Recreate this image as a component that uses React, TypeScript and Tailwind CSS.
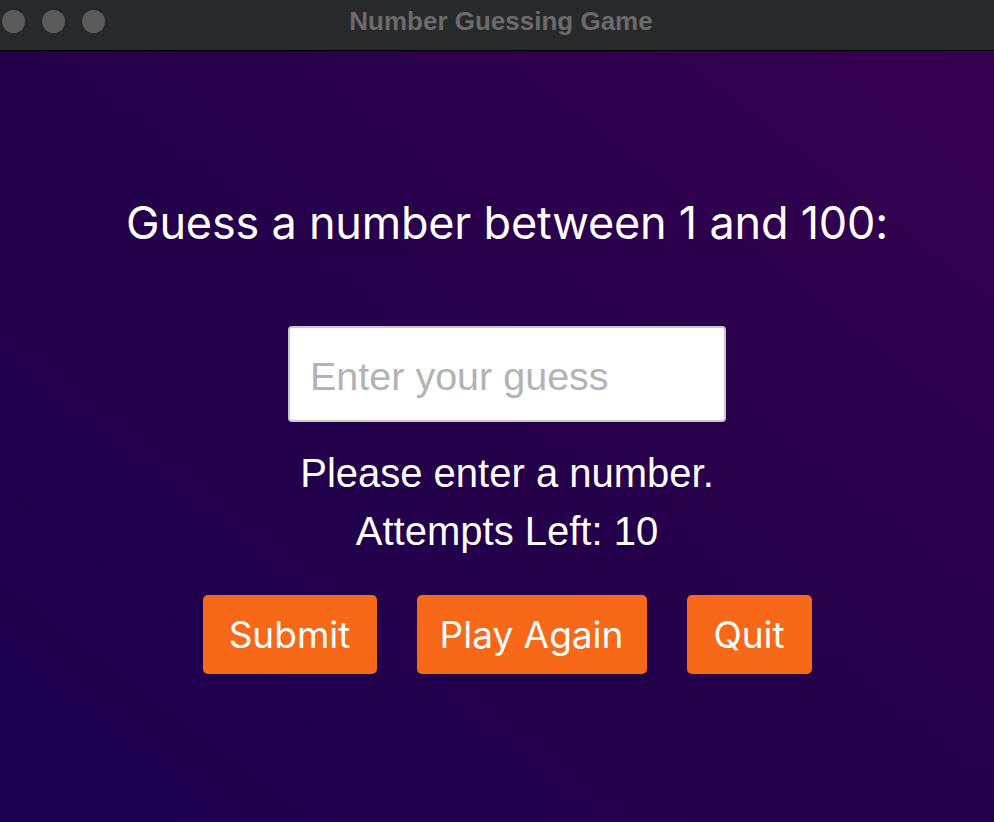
import React from "react";

export default function App() {
  return (
    <div className="flex h-[822px] w-[994px] flex-col overflow-hidden">
      <div className="relative flex h-[51px] shrink-0 items-center justify-center border-b border-black bg-[#28292b]">
        <div className="absolute left-[2px] top-[10px] flex gap-[17px]">
          <div className="h-[23px] w-[23px] rounded-full bg-[#5b5b5c]" />
          <div className="h-[23px] w-[23px] rounded-full bg-[#5b5b5c]" />
          <div className="h-[23px] w-[23px] rounded-full bg-[#5b5b5c]" />
        </div>
        <div className="ml-[8px] mb-[8px] font-['Liberation_Sans',sans-serif] text-[26px] font-bold text-[#6b6b6c]">
          Number Guessing Game
        </div>
      </div>
      <div className="flex flex-1 flex-col items-center bg-[linear-gradient(to_top_right,#1d0052,#25004a_50%,#360052)] pt-[145px] pl-[20px]">
        <h1 className="font-['Inter',sans-serif] text-[45px] leading-[53px] tracking-[-0.2px] text-white">
          Guess a number between 1 and 100:
        </h1>
        <input
          type="text"
          placeholder="Enter your guess"
          className="mt-[77px] h-[96px] w-[438px] rounded-[4px] border-2 border-[#c9c9cc] bg-white px-[20px] pt-[4px] font-['Liberation_Sans',sans-serif] text-[39.5px] text-black placeholder:text-[#b3b3b3] outline-none"
        />
        <div className="mt-[27px] font-['Liberation_Sans',sans-serif] text-[40px] leading-[48px] text-white">
          Please enter a number.
        </div>
        <div className="mt-[10px] font-['Liberation_Sans',sans-serif] text-[40px] leading-[48px] text-white">
          Attempts Left: 10
        </div>
        <div className="mt-[40px] flex gap-[40px]">
          <button className="h-[79px] w-[174px] rounded-[5px] bg-[#f76818] font-['Inter',sans-serif] text-[37px] text-white">
            Submit
          </button>
          <button className="h-[79px] w-[230px] rounded-[5px] bg-[#f76818] font-['Inter',sans-serif] text-[37px] text-white">
            Play Again
          </button>
          <button className="h-[79px] w-[125px] rounded-[5px] bg-[#f76818] font-['Inter',sans-serif] text-[37px] text-white">
            Quit
          </button>
        </div>
      </div>
    </div>
  );
}
